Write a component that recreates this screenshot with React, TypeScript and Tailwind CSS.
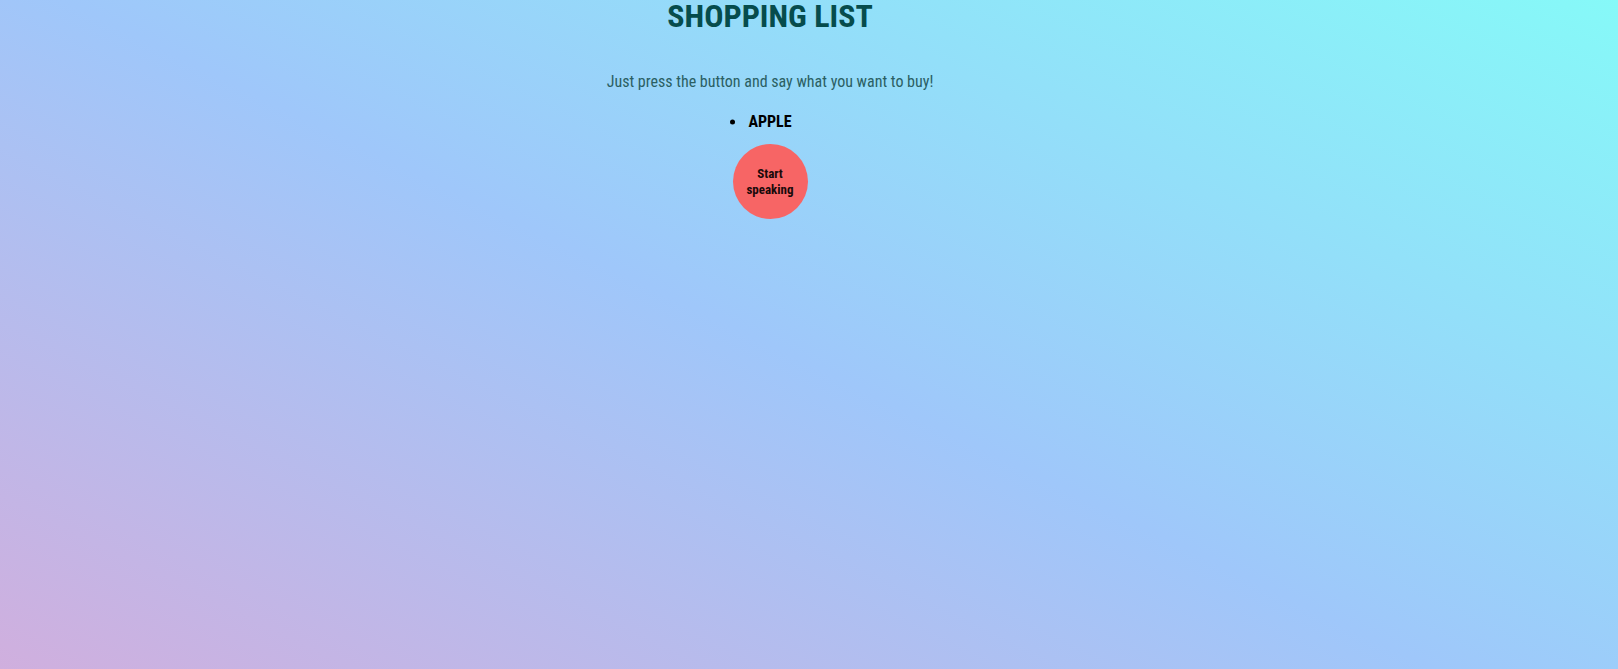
export default function App() {
  return (
    <div
      className="min-h-screen w-full bg-[linear-gradient(26deg,#d0afde,#9fc7fa_48%,#86f9f8)] text-center pr-[78px]"
      style={{ fontFamily: "Roboto, 'Liberation Sans', sans-serif", fontStretch: "condensed" }}
    >
      <h1 className="text-[32px] leading-[32px] font-bold text-[#064c4c]">SHOPPING LIST</h1>
      <p className="mt-[40px] text-[16px] leading-[19px] text-[#2b5f63]">Just press the button and say what you want to buy!</p>
      <ul className="mt-[21px] p-0">
        <li className="text-[16px] leading-[19px] font-bold text-black">
          <span className="relative inline-block">
            <span className="absolute left-[-18px] top-1/2 -translate-y-1/2 w-[5px] h-[5px] rounded-full bg-black" />
            APPLE
          </span>
        </li>
      </ul>
      <div className="mt-[13px] flex justify-center">
        <button className="w-[75px] h-[75px] rounded-full bg-[#f76565] text-[13px] leading-[16px] font-bold text-[#1a0a0a] px-1">
          Start speaking
        </button>
      </div>
    </div>
  );
}
